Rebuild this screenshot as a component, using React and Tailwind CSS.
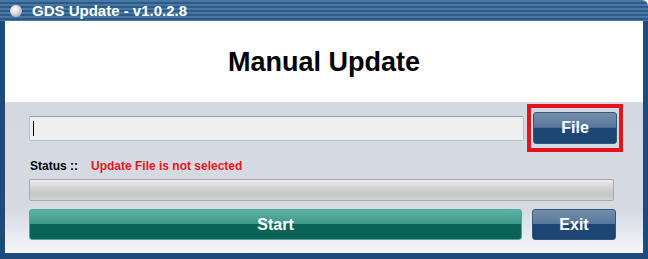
export default function App() {
  return (
    <div className="w-[648px] h-[259px] flex flex-col bg-white font-['Liberation_Sans',Arial,sans-serif] overflow-hidden">
      {/* title bar */}
      <div className="h-[21px] flex items-center rounded-tr-[6px] bg-[repeating-linear-gradient(180deg,#4877a4_0px,#4877a4_2px,#2b5b89_2px,#2b5b89_4px)] shrink-0">
        <div className="ml-[10px] w-[12px] h-[12px] rounded-full bg-[radial-gradient(circle_at_40%_35%,#ffffff_0%,#d8d8d8_45%,#8a8f96_100%)]"></div>
        <span className="ml-[10px] text-white font-bold text-[15px] leading-none">GDS Update - v1.0.2.8</span>
      </div>

      {/* window body */}
      <div className="flex-1 flex flex-col border-x-[5px] border-b-[6px] border-[#1d4c7b]">
        <div className="h-[81px] shrink-0 flex items-center justify-center bg-white">
          <h1 className="text-[27px] font-bold text-black leading-none mt-[2px]">Manual Update</h1>
        </div>

        <div className="flex-1 flex flex-col pt-[2px] bg-[linear-gradient(180deg,#d4d9e1_0%,#d6dbe3_72%,#f4f6fa_100%)]">
          {/* file row */}
          <div className="flex items-center h-[48px] pl-[24px]">
            <div className="w-[495px] h-[25px] bg-[#efefef] border border-[#b7c1cc] border-t-[#8ea0b3] rounded-[2px] flex items-center pl-[3px]">
              <div className="w-[1px] h-[15px] bg-black"></div>
            </div>
            <div className="ml-[3px] w-[96px] h-[48px] border-[4px] border-[#e3141d] flex items-center justify-center">
              <button className="w-[84px] h-[32px] rounded-[3px] border border-[#34577d] bg-[linear-gradient(180deg,#7590ab_0%,#56769a_48%,#1d4675_50%,#1d4675_100%)] text-white font-bold text-[16px] leading-none">
                File
              </button>
            </div>
          </div>

          {/* status */}
          <div className="flex items-center h-[14px] mt-[7px] pl-[25px] text-[12px] font-bold leading-none">
            <span className="w-[61px] text-black">Status ::</span>
            <span className="text-[#e8141c]">Update File is not selected</span>
          </div>

          {/* progress */}
          <div className="ml-[24px] mt-[6px] w-[585px] h-[22px] rounded-[2px] border border-[#a9a9a9] bg-[linear-gradient(180deg,#ececec_0%,#d0d0d0_45%,#c6c6c6_70%,#d6d6d6_100%)]"></div>

          {/* action buttons */}
          <div className="flex items-center mt-[8px] pl-[24px]">
            <button className="w-[493px] h-[31px] rounded-[3px] border border-[#4fa797] bg-[linear-gradient(180deg,#5db0a1_0%,#3d998b_48%,#0b6256_50%,#0b6256_100%)] text-white font-bold text-[16px] leading-none">
              Start
            </button>
            <button className="ml-[10px] w-[84px] h-[31px] rounded-[3px] border border-[#34577d] bg-[linear-gradient(180deg,#7590ab_0%,#56769a_48%,#1d4675_50%,#1d4675_100%)] text-white font-bold text-[16px] leading-none">
              Exit
            </button>
          </div>
        </div>
      </div>
    </div>
  );
}
